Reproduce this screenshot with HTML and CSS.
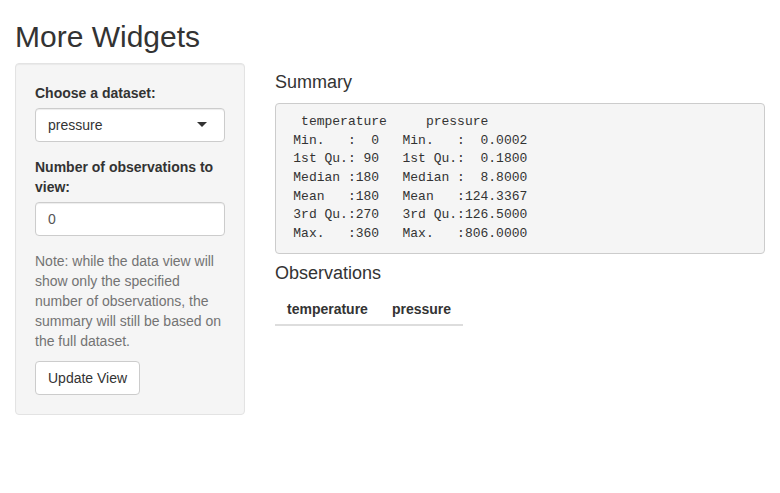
FILE: index.html
```
<!DOCTYPE html>
<html>
<head>
<meta charset="utf-8">
<link rel="stylesheet" href="styles.css">
</head>
<body>
<div class="container">
  <h2 class="title">More Widgets</h2>
  <div class="row">
    <div class="col-side">
      <form class="well">
        <div class="form-group">
          <label class="control-label">Choose a dataset:</label>
          <div class="selectize-input"><span class="item">pressure</span><span class="caret"></span></div>
        </div>
        <div class="form-group">
          <label class="control-label">Number of observations to view:</label>
          <div class="form-control">0</div>
        </div>
        <span class="help-block">Note: while the data view will show only the specified number of observations, the summary will still be based on the full dataset.</span>
        <button type="button" class="btn">Update View</button>
      </form>
    </div>
    <div class="col-main">
      <h4>Summary</h4>
      <pre class="summary">  temperature     pressure       
 Min.   :  0   Min.   :  0.0002  
 1st Qu.: 90   1st Qu.:  0.1800  
 Median :180   Median :  8.8000  
 Mean   :180   Mean   :124.3367  
 3rd Qu.:270   3rd Qu.:126.5000  
 Max.   :360   Max.   :806.0000  </pre>
      <h4>Observations</h4>
      <table class="obs-table">
        <thead>
          <tr><th>temperature</th><th>pressure</th></tr>
        </thead>
        <tbody></tbody>
      </table>
    </div>
  </div>
</div>
</body>
</html>
```

FILE: styles.css
```
* { box-sizing: border-box; }
html, body { margin: 0; padding: 0; background: #fff; }
body {
  font-family: "Liberation Sans", Arial, sans-serif;
  font-size: 14px;
  line-height: 1.42857143;
  color: #333;
}
.container { padding: 0 15px; }
.title {
  font-size: 30px;
  font-weight: 500;
  line-height: 1.1;
  margin: 20px 0 10px;
}
.row { display: flex; margin: 0 -15px; }
.col-side { flex: 0 0 33.3333%; padding: 0 15px; }
.col-main { flex: 0 0 66.6667%; padding: 0 15px; }
.well {
  display: block;
  background: #f5f5f5;
  border: 1px solid #e3e3e3;
  border-radius: 4px;
  box-shadow: inset 0 1px 1px rgba(0,0,0,.05);
  padding: 19px;
  margin-bottom: 20px;
}
.form-group { margin-bottom: 15px; }
.control-label {
  display: inline-block;
  font-weight: bold;
  margin-bottom: 5px;
}
.selectize-input {
  position: relative;
  height: 34px;
  padding: 6px 12px;
  border: 1px solid #ccc;
  border-radius: 4px;
  background: #fff;
  box-shadow: inset 0 1px 1px rgba(0,0,0,.075);
  line-height: 20px;
  color: #333;
}
.caret {
  position: absolute;
  top: 50%;
  right: 17px;
  margin-top: -3px;
  width: 0;
  height: 0;
  border-style: solid;
  border-width: 5px 5px 0 5px;
  border-color: #333 transparent transparent transparent;
}
.form-control {
  height: 34px;
  padding: 6px 12px;
  border: 1px solid #ccc;
  border-radius: 4px;
  background: #fff;
  box-shadow: inset 0 1px 1px rgba(0,0,0,.075);
  line-height: 20px;
  color: #555;
}
.help-block {
  display: block;
  margin: 5px 0 10px;
  color: #737373;
}
.btn {
  display: inline-block;
  font-family: inherit;
  font-size: 14px;
  line-height: 1.42857143;
  padding: 6px 12px;
  color: #333;
  background: #fff;
  border: 1px solid #ccc;
  border-radius: 4px;
  margin: 0;
}
h4 {
  font-size: 18px;
  font-weight: 500;
  line-height: 1.1;
  margin: 10px 0;
}
.summary {
  display: block;
  margin: 0 0 10px;
  padding: 9.5px;
  font-family: "Liberation Mono", "Courier New", monospace;
  font-size: 13px;
  line-height: 1.42857143;
  color: #333;
  background: #f5f5f5;
  border: 1px solid #ccc;
  border-radius: 4px;
  white-space: pre;
  overflow: hidden;
}
.obs-table {
  border-collapse: collapse;
  border-spacing: 0;
  margin-bottom: 20px;
}
.obs-table th {
  text-align: left;
  font-weight: bold;
  padding: 5px 12px;
  border-bottom: 2px solid #ddd;
  line-height: 1.42857143;
}
```
